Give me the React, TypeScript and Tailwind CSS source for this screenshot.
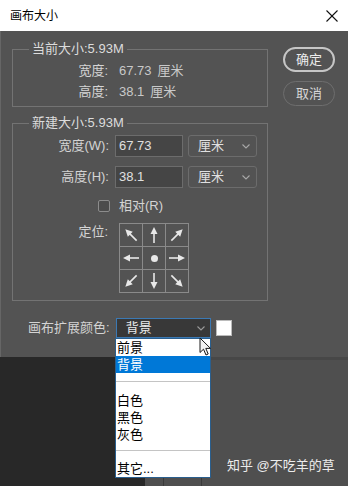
import React from "react";

const FONT = "font-['Liberation_Sans','Noto_Sans_CJK_SC',sans-serif]";

function Arrow({ angle }: { angle: number }) {
  return (
    <svg width="22" height="22" viewBox="0 0 22 22">
      <g transform={`rotate(${angle} 11 11)`}>
        <line x1="11" y1="9" x2="11" y2="19" stroke="#e8e8e8" strokeWidth="1.6" />
        <polygon points="11,3 7.5,10 14.5,10" fill="#e8e8e8" />
      </g>
    </svg>
  );
}

function Chevron({ color = "#a8a8a8" }: { color?: string }) {
  return (
    <svg width="8" height="5" viewBox="0 0 8 5">
      <polyline points="0.5,0.5 4,4 7.5,0.5" fill="none" stroke={color} strokeWidth="1.1" />
    </svg>
  );
}

export default function App() {
  const angles = [-45, 0, 45, -90, null, 90, -135, 180, 135];
  return (
    <div className={`relative w-[348px] h-[486px] overflow-hidden bg-[#282828] ${FONT}`}>
      {/* dialog */}
      <div className="flex flex-col h-[357px]">
        <div className="h-[31px] bg-white flex items-center justify-between pl-[10px] pr-[10px]">
          <span className="text-[12px] text-black leading-none">画布大小</span>
          <svg width="12" height="12" viewBox="0 0 12 12" className="mr-[0px]">
            <line x1="0.5" y1="0.5" x2="11.5" y2="11.5" stroke="#111" strokeWidth="1.1" />
            <line x1="11.5" y1="0.5" x2="0.5" y2="11.5" stroke="#111" strokeWidth="1.1" />
          </svg>
        </div>
        <div className="flex-1 bg-[#535353] flex border-l border-[#666] text-[13px] text-[#d4d4d4]">
          {/* left column */}
          <div className="w-[282px] pl-[11px] pt-[10px] flex flex-col">
            <fieldset className="w-[256px] border border-[#737373] pb-[6px]">
              <legend className="ml-[16px] px-[3px] leading-[16px] text-[#dcdcdc]">当前大小:5.93M</legend>
              <div className="flex flex-col gap-[5px] mt-[6px]">
                <div className="flex h-[16px] leading-[16px] items-center">
                  <span className="w-[95px] text-right">宽度:</span>
                  <span className="ml-[11px] text-[#c9c9c9]">67.73</span>
                  <span className="ml-[6px] text-[#c9c9c9]">厘米</span>
                </div>
                <div className="flex h-[16px] leading-[16px] items-center">
                  <span className="w-[95px] text-right">高度:</span>
                  <span className="ml-[11px] text-[#c9c9c9]">38.1</span>
                  <span className="ml-[6px] text-[#c9c9c9]">厘米</span>
                </div>
              </div>
            </fieldset>

            <fieldset className="w-[256px] border border-[#737373] pb-[7px] mt-[8px]">
              <legend className="ml-[16px] px-[3px] leading-[16px] text-[#dcdcdc]">新建大小:5.93M</legend>
              <div className="flex flex-col mt-[4px]">
                <div className="flex h-[22px] items-center">
                  <span className="w-[96px] text-right leading-[16px]">宽度(W):</span>
                  <div className="ml-[6px] w-[68px] h-[22px] bg-[#454545] border border-[#6c6c6c] flex items-center pl-[3px] text-[#e0e0e0]">67.73</div>
                  <div className="ml-[5px] w-[69px] h-[22px] bg-[#535353] border border-[#6c6c6c] rounded-[3px] flex items-center justify-between pl-[9px] pr-[6px] text-[#e0e0e0]">
                    <span>厘米</span>
                    <Chevron />
                  </div>
                </div>
                <div className="flex h-[22px] items-center mt-[9px]">
                  <span className="w-[96px] text-right leading-[16px]">高度(H):</span>
                  <div className="ml-[6px] w-[68px] h-[22px] bg-[#454545] border border-[#6c6c6c] flex items-center pl-[3px] text-[#e0e0e0]">38.1</div>
                  <div className="ml-[5px] w-[69px] h-[22px] bg-[#535353] border border-[#6c6c6c] rounded-[3px] flex items-center justify-between pl-[9px] pr-[6px] text-[#e0e0e0]">
                    <span>厘米</span>
                    <Chevron />
                  </div>
                </div>
                <div className="flex h-[16px] items-center mt-[10px] pl-[85px]">
                  <div className="w-[12px] h-[12px] border border-[#8c8c8c] bg-[#4c4c4c] rounded-[2px]" />
                  <span className="ml-[9px] leading-[16px]">相对(R)</span>
                </div>
                <div className="flex items-start mt-[9px]">
                  <span className="w-[95px] text-right leading-[16px] mt-[1px]">定位:</span>
                  <div className="ml-[11px] grid grid-cols-3 gap-px bg-[#8a8a8a] p-px w-[70px] h-[70px]">
                    {angles.map((a, i) => (
                      <div key={i} className="bg-[#535353] flex items-center justify-center">
                        {a === null ? (
                          <div className="w-[7px] h-[7px] rounded-full bg-[#e8e8e8]" />
                        ) : (
                          <Arrow angle={a} />
                        )}
                      </div>
                    ))}
                  </div>
                </div>
              </div>
            </fieldset>

            <div className="flex items-center mt-[17px] h-[20px]">
              <span className="ml-[16px] leading-[16px]">画布扩展颜色:</span>
              <div className="ml-[6px] w-[95px] h-[20px] bg-[#383838] border border-[#3b79b4] flex items-center justify-between pl-[9px] pr-[5px] text-[#eaeaea]">
                <span>背景</span>
                <Chevron color="#9a9a9a" />
              </div>
              <div className="ml-[5px] w-[16px] h-[16px] bg-white border border-[#bbb]" />
            </div>
          </div>

          {/* right column */}
          <div className="flex flex-col pt-[16px] gap-[9px]">
            <button className="w-[52px] h-[25px] rounded-full border-2 border-[#c6c6c6] text-[13px] text-[#ececec] flex items-center justify-center leading-none">确定</button>
            <button className="w-[52px] h-[25px] rounded-full border-[1.5px] border-[#6e6e6e] text-[13px] text-[#d8d8d8] flex items-center justify-center leading-none">取消</button>
          </div>
        </div>
      </div>

      {/* below dialog */}
      <div className="flex h-[129px]">
        <div className="w-[145px] bg-[#282828]" />
        <div className="flex-1 bg-[#4f4f4f] border-t-[3px] border-[#474747]" />
      </div>

      {/* lines below dropdown */}
      <div className="absolute left-[163px] top-[470px] w-px h-[16px] bg-[#3a3a3a]" />
      <div className="absolute left-[201px] top-[470px] w-px h-[16px] bg-[#3a3a3a]" />

      {/* dropdown list */}
      <div className="absolute left-[115px] top-[338px] w-[96px] h-[140px] bg-white border border-[#2a5f8e] text-[13px] text-black leading-[17px]">
        <div className="h-[17px] pl-[1px]">前景</div>
        <div className="h-[17px] pl-[1px] bg-[#0078d7] text-white">背景</div>
        <div className="h-[8px]" />
        <div className="h-px bg-[#c4c4c4]" />
        <div className="h-[10px]" />
        <div className="h-[17px] pl-[1px]">白色</div>
        <div className="h-[17px] pl-[1px]">黑色</div>
        <div className="h-[17px] pl-[1px]">灰色</div>
        <div className="h-[7px]" />
        <div className="h-px bg-[#c4c4c4]" />
        <div className="h-[9px]" />
        <div className="h-[17px] pl-[1px]">其它...</div>
      </div>

      {/* cursor */}
      <svg className="absolute left-[199px] top-[337px]" width="14" height="20" viewBox="0 0 14 20">
        <path d="M1 1 L1 15.5 L4.5 12.2 L7 18 L9.2 17 L6.8 11.4 L11.5 11.4 Z" fill="#f2f2f2" stroke="#1a1a1a" strokeWidth="1" strokeLinejoin="round" />
      </svg>

      {/* watermark */}
      <div className="absolute left-[227px] top-[457px] text-[13px] leading-[18px] text-[#ececec]">知乎 @不吃羊的草</div>
    </div>
  );
}
